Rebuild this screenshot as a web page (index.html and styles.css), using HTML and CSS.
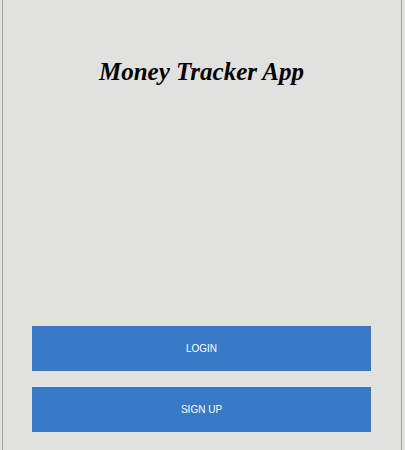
FILE: index.html
```html
<!DOCTYPE html>
<html>
<head>
<meta charset="utf-8">
<link rel="stylesheet" href="styles.css">
</head>
<body>
<div class="frame">
  <h1 class="title">Money Tracker App</h1>
  <div class="spacer"></div>
  <div class="actions">
    <button class="btn">LOGIN</button>
    <button class="btn">SIGN UP</button>
  </div>
</div>
</body>
</html>
```
FILE: styles.css
```css
html, body {
  margin: 0;
  padding: 0;
  background: #e1e1df;
  height: 100%;
}
.frame {
  margin: 0 3px 0 2px;
  border-left: 1px solid #a3a39d;
  border-right: 1px solid #a3a39d;
  height: 450px;
  box-sizing: border-box;
  display: flex;
  flex-direction: column;
  padding: 0 30px 18px 29px;
}
.title {
  margin: 58px 0 0;
  font-family: "Liberation Serif", serif;
  font-weight: bold;
  font-style: italic;
  font-size: 25px;
  line-height: 28px;
  text-align: center;
  color: #000;
}
.spacer { flex: 1; }
.actions {
  display: flex;
  flex-direction: column;
  gap: 16px;
}
.btn {
  height: 45px;
  border: none;
  background: #3779c4;
  color: #fff;
  font-family: "Liberation Sans", Arial, sans-serif;
  font-size: 10px;
  padding: 0;
}
```
